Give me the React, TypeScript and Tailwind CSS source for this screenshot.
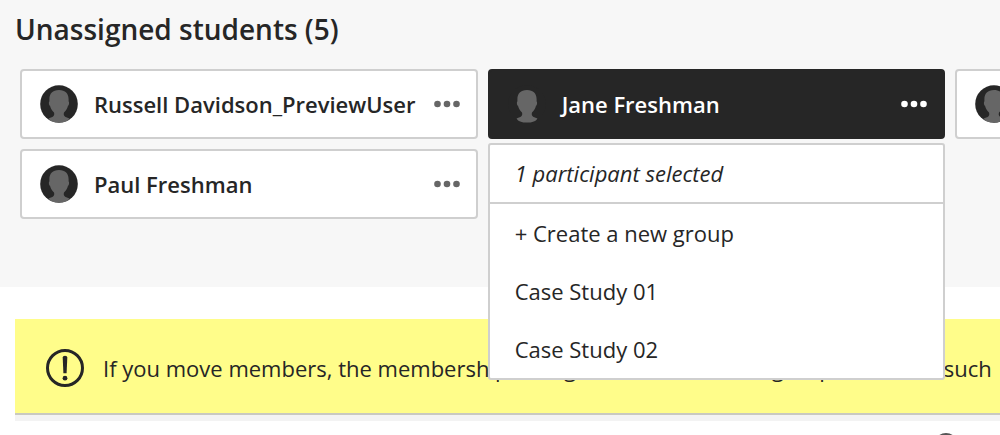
import React from "react";

type Student = { name: string; selected?: boolean };

const students: Student[] = [
  { name: "Russell Davidson_PreviewUser" },
  { name: "Jane Freshman", selected: true },
  { name: "" },
  { name: "Paul Freshman" },
];

const groupOptions = ["+ Create a new group", "Case Study 01", "Case Study 02"];

function Avatar() {
  return (
    <svg viewBox="0 0 38 38" className="size-[38px] shrink-0" aria-hidden="true">
      <circle cx="19" cy="19" r="18.8" fill="#262626" />
      <path
        fill="#666666"
        d="M19 5C12.600 5 9.400 8.800 9.400 14V16.600C8.600 16.600 8.800 20.400 10 20.800C10.800 24 12.400 25.800 14 27.600C14.800 30.600 13.800 32 8.600 33.400C9.400 35.800 14 37.600 19 37.600S28.600 35.800 29.400 33.400C24.200 32 23.200 30.600 24 27.600C25.600 25.800 27.200 24 28 20.800C29.200 20.400 29.400 16.600 28.600 16.600V14C28.600 8.800 25.400 5 19 5Z"
      />
    </svg>
  );
}

function Dots() {
  return (
    <svg viewBox="0 0 26 8" className="h-2 w-[26px]" fill="currentColor" aria-hidden="true">
      <circle cx="3.5" cy="4" r="3.3" />
      <circle cx="13" cy="4" r="3.3" />
      <circle cx="22.5" cy="4" r="3.3" />
    </svg>
  );
}

function GroupMenu() {
  return (
    <div className="absolute top-full left-0 z-10 mt-1 w-full rounded-[3px] border-2 border-[#cfcfcf] bg-white">
      <p className="border-b-2 border-[#cfcfcf] px-[25px] pt-[13px] pb-[14px] text-[22px] leading-[30px] italic">
        1 participant selected
      </p>
      <ul>
        {groupOptions.map((option) => (
          <li key={option}>
            <button type="button" className="w-full px-[25px] py-[14px] text-left text-[22px] leading-[30px]">
              {option}
            </button>
          </li>
        ))}
      </ul>
    </div>
  );
}

function StudentCard({ name, selected }: Student) {
  return (
    <li className="relative">
      <div
        className={
          selected
            ? "flex h-[70px] items-center gap-4 rounded-[4px] border-2 border-[#262626] bg-[#262626] pr-4 pl-[18px] text-white"
            : "flex h-[70px] items-center gap-4 rounded-[4px] border-2 border-[#cfcfcf] bg-white pr-4 pl-[18px] text-[#262626]"
        }
      >
        <Avatar />
        <span className="min-w-0 flex-1 text-[22px] leading-[30px] font-semibold whitespace-nowrap">{name}</span>
        <button
          type="button"
          aria-label={`Options for ${name || "student"}`}
          className={selected ? "-ml-4 shrink-0 text-white" : "-ml-4 shrink-0 text-[#666666]"}
        >
          <Dots />
        </button>
      </div>
      {selected && <GroupMenu />}
    </li>
  );
}

export default function App() {
  return (
    <main className="h-screen overflow-hidden bg-white font-['Open_Sans',sans-serif] text-[#262626]">
      <section className="bg-[#f7f7f7] pt-[11px] pb-[68px]">
        <h1 className="pl-[15px] text-[28px] leading-[36px] font-semibold">Unassigned students (5)</h1>
        <ul className="mt-[22px] ml-5 grid grid-cols-[46.7%_46.7%_46.7%] gap-[10px]">
          {students.map((student, i) => (
            <StudentCard key={i} {...student} />
          ))}
        </ul>
      </section>

      <section className="mt-8 ml-[15px]">
        <div className="flex h-24 items-center gap-[19px] overflow-hidden border-b-2 border-[#c9c9c0] bg-[#fffd8a] pt-1 pl-[31px]">
          <svg viewBox="0 0 38 38" className="size-[38px] shrink-0" aria-hidden="true">
            <circle cx="19" cy="19" r="17.5" fill="none" stroke="#262626" strokeWidth="3" />
            <path d="M16.700 8.500Q16.700 6.800 19 6.800T21.300 8.500L20.600 24.200H17.400Z" fill="#262626" />
            <circle cx="19" cy="29.2" r="2.4" fill="#262626" />
          </svg>
          <p className="text-[22px] leading-[30px] whitespace-nowrap">
            If you move members, the membership changes for areas where groups are used such
          </p>
        </div>
        <div className="h-[6px] bg-[#f3f3f3]" />
        <div className="flex pt-3">
          <svg viewBox="0 0 24 24" className="ml-[93.3%] size-6 shrink-0" aria-hidden="true">
            <circle cx="12" cy="12" r="10.5" fill="none" stroke="#555555" strokeWidth="3" />
          </svg>
        </div>
      </section>
    </main>
  );
}
